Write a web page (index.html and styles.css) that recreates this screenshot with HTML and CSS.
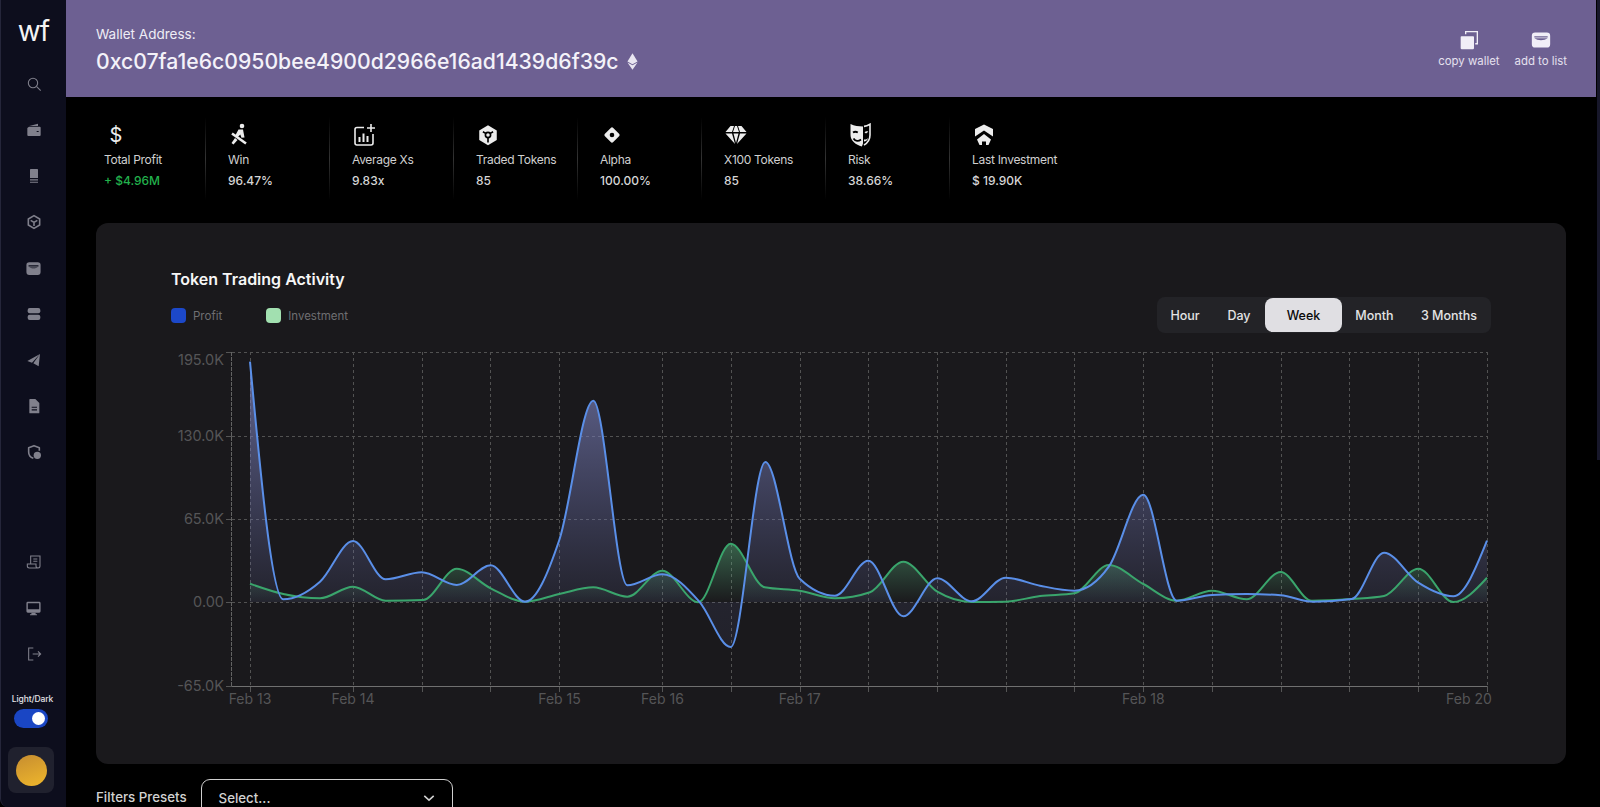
FILE: index.html
```html
<!DOCTYPE html>
<html lang="en">
<head>
<meta charset="utf-8">
<title>Wallet</title>
<link rel="stylesheet" href="styles.css">
</head>
<body>
<div class="app">
  <aside class="sidebar">
    <div class="logo">wf</div>
    <nav class="nav">
      <a class="nav-item"><svg class="ico-s" viewBox="0 0 24 24"><circle cx="10.5" cy="10.5" r="7" class="st"/><path d="M16 16l6 6" class="st"/></svg></a>
      <a class="nav-item"><svg class="ico-s" viewBox="0 0 24 24"><path fill-rule="evenodd" d="M4.5 7h16A1.5 1.5 0 0 1 22 8.500V19.500A1.500 1.500 0 0 1 20.500 21H3.500A1.500 1.500 0 0 1 2 19.500V9zM5 6l13-3.500V6zM16 13.500h3V15h-3z"/></svg></a>
      <a class="nav-item"><svg class="ico-s" viewBox="0 0 24 24"><path d="M7 1.500h10a1 1 0 0 1 1 1V15H6V2.500a1 1 0 0 1 1-1zM6 17h12v1.800H6zM6 20.500h12v1.800H6z"/></svg></a>
      <a class="nav-item"><svg class="ico-s" viewBox="0 0 24 24"><path class="st2" d="M12 2.500l8.500 5v9l-8.500 5-8.500-5v-9zM7 9.500l5 3 5-3M12 12.500V18"/></svg></a>
      <a class="nav-item"><svg class="ico-s ico-wide" viewBox="0 0 24 24"><path fill-rule="evenodd" d="M6 3h12a4 4 0 0 1 4 4v10a4 4 0 0 1-4 4H6a4 4 0 0 1-4-4V7a4 4 0 0 1 4-4zM5 7.500v1.700h14V7.500zM6 10.500c2 1.500 10 1.500 12 0z"/></svg></a>
      <a class="nav-item"><svg class="ico-s" viewBox="0 0 24 24"><rect x="2.500" y="3" width="19" height="8" rx="3"/><rect x="2.500" y="13" width="19" height="8" rx="3"/></svg></a>
      <a class="nav-item"><svg class="ico-s" viewBox="0 0 24 24"><path d="M21 3L2 13.500l7 2.500zM21 3L11 17l8 4.500z"/></svg></a>
      <a class="nav-item"><svg class="ico-s" viewBox="0 0 24 24"><path fill-rule="evenodd" d="M6 1.500h8l6 6V22a1 1 0 0 1-1 1H6a1 1 0 0 1-1-1V2.500a1 1 0 0 1 1-1zM8.500 13v1.600h8V13zM8.500 17v1.600h8V17z"/></svg></a>
      <a class="nav-item"><svg class="ico-s" viewBox="0 0 24 24"><path class="st2" d="M11 21.500C6.500 20 4 16.500 4 12V5.500l8-3 8 3V10"/><circle cx="17" cy="17" r="5.500"/></svg></a>
    </nav>
    <div class="spacer"></div>
    <nav class="nav">
      <a class="nav-item"><svg class="ico-s" viewBox="0 0 24 24"><path class="st" d="M7 15V3h14v15a3 3 0 0 1-3 3H5a3 3 0 0 1-3-3v-3h13v3a3 3 0 0 0 3 3M11 7.500h6M11 11h6"/></svg></a>
      <a class="nav-item"><svg class="ico-s ico-wide" viewBox="0 0 24 24"><path fill-rule="evenodd" d="M4 2.500h16a2 2 0 0 1 2 2V16a2 2 0 0 1-2 2H4a2 2 0 0 1-2-2V4.500a2 2 0 0 1 2-2zM4 4.500V13h16V4.500z"/><path d="M9 18h6v2h2v1.500H7V20h2z"/></svg></a>
      <a class="nav-item"><svg class="ico-s" viewBox="0 0 24 24"><path class="st" d="M11 3H4v18h7M10 12h12M18 8l4 4-4 4"/></svg></a>
    </nav>
    <div class="mode-label">Light/Dark</div>
    <div class="toggle"><span class="knob"></span></div>
    <div class="avatar-box"><span class="avatar"></span></div>
  </aside>

  <main class="main">
    <header class="banner">
      <div class="wallet">
        <div class="wallet-label">Wallet Address:</div>
        <div class="wallet-address">
          <span>0xc07fa1e6c0950bee4900d2966e16ad1439d6f39c</span>
          <svg class="eth" viewBox="0 0 12 18"><path d="M6 0l5.500 9L6 12 .5 9z"/><path d="M6 13.200l5.500-3.200L6 18 .5 10z"/></svg>
        </div>
      </div>
      <div class="actions">
        <div class="action">
          <svg class="action-ico" viewBox="0 0 24 24"><path d="M3 7.500h14a1 1 0 0 1 1 1V22a1 1 0 0 1-1 1H3a1 1 0 0 1-1-1V8.500a1 1 0 0 1 1-1z"/><path class="st" d="M8 5V2h14v14.500h-2.500"/></svg>
          <span>copy wallet</span>
        </div>
        <div class="action">
          <svg class="action-ico" viewBox="0 0 24 24"><path fill-rule="evenodd" d="M5 3h14a4 4 0 0 1 4 4v10a4 4 0 0 1-4 4H5a4 4 0 0 1-4-4V7a4 4 0 0 1 4-4zM4 7.500v1.500h16V7.500zM4 10c4 3 12 3 16 0z"/></svg>
          <span>add to list</span>
        </div>
      </div>
    </header>

    <section class="stats">
      <div class="stat">
        <div class="stat-ico dollar">$</div>
        <div class="stat-label">Total Profit</div>
        <div class="stat-value gain">+ $4.96M</div>
      </div>
      <div class="divider"></div>
      <div class="stat">
        <svg class="stat-ico" viewBox="0 0 24 24"><circle cx="14" cy="3" r="2.300"/><path d="M10.500 6.500h4.500l1.500 8-3 .2-1.200-3.200-3.300 3.200-2-1.700zM7 15l-3.500 5 2 1.500 4-4.500z"/><path class="st-b" d="M4 10.500l14 10"/></svg>
        <div class="stat-label">Win</div>
        <div class="stat-value">96.47%</div>
      </div>
      <div class="divider"></div>
      <div class="stat">
        <svg class="stat-ico" viewBox="0 0 24 24"><path class="st" d="M12 4.500H5a2 2 0 0 0-2 2V20a2 2 0 0 0 2 2h14a2 2 0 0 0 2-2v-9"/><path class="st" d="M19 1v8M15 5h8"/><path d="M6.500 14h2v5h-2zM10.500 10.500h2V19h-2zM14.500 13h2v6h-2z"/></svg>
        <div class="stat-label">Average Xs</div>
        <div class="stat-value">9.83x</div>
      </div>
      <div class="divider"></div>
      <div class="stat">
        <svg class="stat-ico" viewBox="-1 -1 26 26"><path d="M12 1.500l9.500 5.500v10.500L12 23l-9.500-5.500V7z"/><path class="cut" d="M6.500 8.500L10 10.500M17.500 8.500L14 10.500M12 15v5"/><circle class="cut" cx="12" cy="12" r="2.800"/></svg>
        <div class="stat-label">Traded Tokens</div>
        <div class="stat-value">85</div>
      </div>
      <div class="divider"></div>
      <div class="stat">
        <svg class="stat-ico" viewBox="-2.500 -2.500 29 29"><path fill-rule="evenodd" d="M10.500 3.500a2 2 0 0 1 3 0l7 7a2 2 0 0 1 0 3l-7 7a2 2 0 0 1-3 0l-7-7a2 2 0 0 1 0-3zM12 9.200a2.800 2.800 0 1 0 0 5.600a2.800 2.800 0 1 0 0-5.600z"/></svg>
        <div class="stat-label">Alpha</div>
        <div class="stat-value">100.00%</div>
      </div>
      <div class="divider"></div>
      <div class="stat">
        <svg class="stat-ico" viewBox="0 0 24 24"><path d="M6.500 3h3.500L8 9H1.500zM11 3h2l2 6H9zM14 3h3.500l5 6H16zM1.500 10.500H8l3 10.500zM9.500 10.500h5L12 20zM16 10.500h6.500L13 21z"/></svg>
        <div class="stat-label">X100 Tokens</div>
        <div class="stat-value">85</div>
      </div>
      <div class="divider"></div>
      <div class="stat">
        <svg class="stat-ico" viewBox="0 0 24 24"><path d="M2.500 1c4 1.800 8 2.500 12.500 2.500v17c-.3 1.200-.7 2-1.200 3C8 22 2.500 17.500 2.500 12z"/><path class="st" d="M16 3.400c2.500-.2 4-1 6-2.200V12c0 4.500-2.500 8-6 10"/><path class="cut" d="M5 9.500c1.500-1 3.200-1 4.800 0M5.500 15.500c2 3 5 3 7.500 1"/><path d="M16.500 9.300c1.200-1 2.500-1.200 3.800-.6L18 10.500zM16 16.500c1.500.3 2.800-.2 4-1.500-.3 2-2 3.500-4 3.500z"/></svg>
        <div class="stat-label">Risk</div>
        <div class="stat-value">38.66%</div>
      </div>
      <div class="divider"></div>
      <div class="stat">
        <svg class="stat-ico" viewBox="0 0 24 24"><path d="M12 1.500l9 4.500v7.500l-9-6-9 6V6z"/><path d="M12 11l7 5.500L16.500 22H14v-3.500h-4V22H7.500L5 16.500z"/></svg>
        <div class="stat-label">Last Investment</div>
        <div class="stat-value">$ 19.90K</div>
      </div>
    </section>

    <section class="card">
      <h2 class="card-title">Token Trading Activity</h2>
      <div class="toolbar">
        <div class="legend">
          <span class="legend-item"><i class="swatch swatch-blue"></i>Profit</span>
          <span class="legend-item"><i class="swatch swatch-green"></i>Investment</span>
        </div>
        <div class="segments">
          <button class="segment">Hour</button>
          <button class="segment">Day</button>
          <button class="segment is-active">Week</button>
          <button class="segment">Month</button>
          <button class="segment">3 Months</button>
        </div>
      </div>
      <svg id="chart" class="chart" viewBox="165 340 1330 370" width="1330" height="370"></svg>
    </section>

    <section class="filters">
      <span class="filters-label">Filters Presets</span>
      <div class="select">
        <span>Select...</span>
        <svg class="chevron" viewBox="0 0 14 8"><path d="M1.500 1.500L7 6.500l5.500-5"/></svg>
      </div>
    </section>
  </main>
  <div class="scroll-thumb"></div>
</div>
<script src="chart.js"></script>
</body>
</html>
```

FILE: styles.css
```css
* { box-sizing: border-box; }
html, body { margin: 0; height: 100%; background: #000; overflow: hidden; }
body { font-family: Inter, "Liberation Sans", sans-serif; color: #e6e6e6; }

.app { display: flex; height: 807px; position: relative; overflow: hidden; }

/* sidebar */
.sidebar {
  width: 66px; flex: none; height: 807px;
  display: flex; flex-direction: column; align-items: center;
  background: #0d0e1d; border-left: 1px solid #25263a; border-bottom-left-radius: 8px;
  color: #80808c; padding-bottom: 14px;
}
.logo { height: 61px; padding-top: 14px; font-size: 28px; line-height: 34px; font-weight: 400; color: #f4f4f4; letter-spacing: -1px; }
.nav { display: flex; flex-direction: column; align-items: center; }
.nav-item { width: 46px; height: 46px; display: flex; align-items: center; justify-content: center; }
.spacer { flex: 1; }
.ico-s { width: 16px; height: 16px; fill: currentColor; }
.ico-wide { width: 17px; height: 17px; }
.st { fill: none; stroke: currentColor; stroke-width: 1.6; }
.st-b { fill: none; stroke: currentColor; stroke-width: 2.600; }
.st2 { fill: none; stroke: currentColor; stroke-width: 2.400; stroke-linejoin: round; }
.cut { fill: none; stroke: #000; stroke-width: 1.8; }
.mode-label { margin: 16px 2px 0 0; font-size: 8.500px; line-height: 12px; font-weight: 500; color: #e4e4e8; white-space: nowrap; letter-spacing: -.1px; }
.toggle { width: 34px; height: 19px; margin: 4px 5px 0 0; padding: 3px 3px 3px 18px; border-radius: 10px; background: #1a46c4; }
.knob { display: block; width: 13px; height: 13px; border-radius: 50%; background: #fff; }
.avatar-box { width: 46px; height: 46px; margin: 19px 5px 0 0; border-radius: 8px; background: #20212e; display: flex; align-items: flex-start; justify-content: center; padding-top: 8px; }
.avatar { width: 31px; height: 31px; border-radius: 50%; background: linear-gradient(160deg, #c68d30, #efb72c); }

/* main */
.main { flex: 1; min-width: 0; padding-right: 4px; }
.banner {
  height: 97px; background: #6d6092; padding: 0 29px 0 30px;
  display: flex; align-items: flex-start; justify-content: space-between;
}
.wallet-label { margin-top: 26px; font-size: 13.500px; line-height: 17px; color: #efedf5; }
.wallet-address { margin-top: 5px; display: flex; align-items: center; gap: 8px; font-size: 21.200px; line-height: 26px; font-weight: 500; color: #f4f2f9; }
.eth { width: 11px; height: 17px; fill: #e9e6f1; }
.actions { display: flex; gap: 15px; padding-top: 30px; }
.action { display: flex; flex-direction: column; align-items: center; gap: 3px; font-size: 11.400px; line-height: 16px; color: #e5e1ef; }
.action-ico { width: 20px; height: 20px; fill: #f1eef7; color: #f1eef7; }

/* stats */
.stats { display: flex; height: 83px; margin-top: 20px; padding-left: 38px; }
.stat { width: 101px; padding-top: 6px; }
.divider { width: 1px; margin-right: 22px; background: linear-gradient(to bottom, transparent, #333 50%, transparent); }
.stat-ico { display: block; width: 24px; height: 24px; fill: #ececec; color: #ececec; }
.dollar { font-size: 20px; line-height: 24px; text-align: center; font-weight: 400; }
.stat-label { margin-top: 5px; font-size: 12px; line-height: 16px; color: #d0d0d0; white-space: nowrap; letter-spacing: -.3px; }
.stat-value { margin-top: 5px; font-size: 12px; line-height: 16px; font-weight: 500; color: #d6d6d6; white-space: nowrap; }
.gain { color: #22b14c; }

/* card */
.card { width: 1470px; height: 541px; margin: 23px 0 0 30px; padding: 46px 0 0 69px; border-radius: 12px; background: #1a191c; }
.card-title { margin: 0 0 0 6px; font-size: 16px; line-height: 20px; font-weight: 600; color: #f6f6f6; }
.toolbar { width: 1326px; height: 36px; margin-top: 8px; padding-left: 6px; display: flex; align-items: center; justify-content: space-between; }
.legend { display: flex; margin-top: 1px; }
.legend-item { display: flex; align-items: center; gap: 7px; font-size: 11.500px; color: #6f6f72; }
.legend-item + .legend-item { margin-left: 44px; }
.swatch { width: 15px; height: 15px; border-radius: 4px; }
.swatch-blue { background: #1c48c9; }
.swatch-green { background: #a2e0b0; }
.segments { display: grid; grid-template-columns: 56px 52px 77px 65px 84px; height: 36px; padding: 1px 0; border-radius: 8px; background: #232327; }
.segment { border: 0; padding: 0; background: none; font: 500 12.500px Inter, "Liberation Sans", sans-serif; color: #e4e4e4; border-radius: 8px; }
.is-active { background: #e0dfe3; color: #0a0a0a; }
.chart { display: block; margin-top: 7px; overflow: visible; }
.grid { stroke: #525252; stroke-width: 1; stroke-dasharray: 3 3; fill: none; }
.axis { stroke: #707070; stroke-width: 1; fill: none; }
.axis-y { stroke: #636363; stroke-dasharray: 4 1; }
.tick { stroke: #555; stroke-width: 1; }
.lbl { fill: #555557; font-size: 14px; font-family: Inter, "Liberation Sans", sans-serif; }
.lbl-y { font-size: 14.500px; }
.line { fill: none; stroke-width: 2; stroke-linejoin: round; }
.line-blue { stroke: #5a8fe8; }
.line-green { stroke: #3aa56c; }

/* filters */
.filters { display: flex; align-items: flex-start; gap: 14px; margin: 15px 0 0 30px; }
.filters-label { margin-top: 9px; font-size: 13.300px; line-height: 18px; font-weight: 500; color: #d2d2d2; }
.select { width: 252px; height: 38px; padding: 0 17px; border: 1.500px solid #cfcfcf; border-radius: 9px; display: flex; align-items: center; justify-content: space-between; font-size: 13.300px; font-weight: 500; color: #d2d2d2; }
.chevron { width: 12px; height: 8px; fill: none; stroke: #d2d2d2; stroke-width: 1.800; }

.scroll-thumb { position: absolute; top: 0; right: 0; width: 3px; height: 460px; background: #17172a; }
```

FILE: chart.js
```js
(function () {
  var NS = 'http://www.w3.org/2000/svg';
  var svg = document.getElementById('chart');
  var ZERO = 602;

  var blue = [[250,361.7],[283.3,599.3],[320,581.7],[353,541],[385.7,579.3],[421.7,572.3],[456.7,585],[490.7,565.3],[525,601.7],[559.3,540],[593.3,400.7],[627.3,585.3],[662.3,574.3],[699.3,601.7],[730.7,647],[765.3,462],[799.7,578.7],[835,595.7],[868.3,560.7],[903.3,616.3],[937.3,578.3],[971.7,601.3],[1005.7,577.7],[1040,585.7],[1074.3,590.7],[1108.8,566.7],[1143.3,494.7],[1176.7,600.7],[1212,595],[1246.7,594],[1280.7,595.3],[1313.3,601.7],[1351.7,599],[1384,552.7],[1418.3,582.7],[1453.3,596.3],[1487,540.7]];
  var green = [[250,583.7],[283.3,594],[320,598.3],[353,586.7],[385.7,600.7],[423,600],[456.7,568.7],[490.7,588.3],[525,601.7],[559.3,594],[593.3,587.3],[627.3,596.7],[662.3,570.7],[698.3,602.3],[730.7,543.7],[764.7,587.3],[799.7,590.7],[835,598.3],[870,592.3],[903.3,561.7],[937.3,591.7],[971.7,602],[1005.7,601.7],[1040,596],[1074.3,593.3],[1108.8,565],[1143.3,584],[1176.7,600.7],[1212,590.7],[1246.7,599.3],[1280.7,572],[1311.7,600.7],[1351.7,599],[1384,596],[1418.3,568.7],[1453.3,602],[1487,577.7]];

  function sign(v) { return v < 0 ? -1 : 1; }

  function tangents(pts) {
    var n = pts.length, t = [], i;
    for (i = 1; i < n - 1; i++) {
      var h0 = pts[i][0] - pts[i - 1][0], h1 = pts[i + 1][0] - pts[i][0];
      var s0 = (pts[i][1] - pts[i - 1][1]) / h0, s1 = (pts[i + 1][1] - pts[i][1]) / h1;
      var p = (s0 * h1 + s1 * h0) / (h0 + h1);
      t[i] = (sign(s0) + sign(s1)) * Math.min(Math.abs(s0), Math.abs(s1), 0.5 * Math.abs(p));
    }
    t[0] = (3 * (pts[1][1] - pts[0][1]) / (pts[1][0] - pts[0][0]) - t[1]) / 2;
    t[n - 1] = (3 * (pts[n - 1][1] - pts[n - 2][1]) / (pts[n - 1][0] - pts[n - 2][0]) - t[n - 2]) / 2;
    return t;
  }

  /* monotone-x interpolation */
  function smooth(pts) {
    var t = tangents(pts), d = 'M' + pts[0][0] + ' ' + pts[0][1];
    for (var i = 1; i < pts.length; i++) {
      var a = pts[i - 1], b = pts[i], dx = (b[0] - a[0]) / 3;
      d += 'C' + (a[0] + dx).toFixed(1) + ' ' + (a[1] + dx * t[i - 1]).toFixed(1) + ' ' +
        (b[0] - dx).toFixed(1) + ' ' + (b[1] - dx * t[i]).toFixed(1) + ' ' + b[0] + ' ' + b[1];
    }
    return d;
  }

  function el(name, attrs, text) {
    var n = document.createElementNS(NS, name);
    for (var k in attrs) n.setAttribute(k, attrs[k]);
    if (text) n.textContent = text;
    svg.appendChild(n);
    return n;
  }

  function gradient(defs, id, y1, y2, stops) {
    var g = document.createElementNS(NS, 'linearGradient');
    g.setAttribute('id', id);
    g.setAttribute('gradientUnits', 'userSpaceOnUse');
    g.setAttribute('x1', 0); g.setAttribute('x2', 0);
    g.setAttribute('y1', y1); g.setAttribute('y2', y2);
    stops.forEach(function (st) {
      var s = document.createElementNS(NS, 'stop');
      s.setAttribute('offset', st[0]);
      s.setAttribute('stop-color', st[1]);
      s.setAttribute('stop-opacity', st[2]);
      g.appendChild(s);
    });
    defs.appendChild(g);
  }

  var defs = el('defs', {});
  gradient(defs, 'fillBlue', 360, 650, [[0, '#8186c0', 0.72], [0.83, '#6a70b0', 0.12], [1, '#6a70b0', 0.1]]);
  gradient(defs, 'fillGreen', 543, 603, [[0, '#5fc58a', 0.42], [1, '#5fc58a', 0]]);

  var vx = [250,353,421.7,490.3,559,662,730.7,799.7,868.3,937.3,1005.7,1074.3,1143.3,1212,1280.7,1349.3,1418.3,1487];
  var hy = [352, 436, 519, 602];
  hy.forEach(function (y) {
    el('line', { 'class': 'grid', x1: 232, x2: 1487, y1: y + 0.5, y2: y + 0.5 });
    el('line', { 'class': 'tick', x1: 226, x2: 232, y1: y + 0.5, y2: y + 0.5 });
  });
  el('line', { 'class': 'tick', x1: 226, x2: 232, y1: 686.5, y2: 686.5 });
  vx.forEach(function (x) {
    var rx = Math.round(x) + 0.5;
    el('line', { 'class': 'grid', x1: rx, x2: rx, y1: 352, y2: 686 });
    el('line', { 'class': 'tick', x1: rx, x2: rx, y1: 686, y2: 692 });
  });
  el('line', { 'class': 'axis axis-y', x1: 231.5, x2: 231.5, y1: 352, y2: 686 });
  el('line', { 'class': 'axis', x1: 232, x2: 1487, y1: 686.5, y2: 686.5 });

  function area(points, id) {
    var d = smooth(points);
    var last = points[points.length - 1];
    d += 'L' + last[0] + ' ' + ZERO + 'L' + points[0][0] + ' ' + ZERO + 'Z';
    el('path', { d: d, fill: 'url(#' + id + ')' });
  }
  area(blue, 'fillBlue');
  area(green, 'fillGreen');
  el('path', { 'class': 'line line-green', d: smooth(green) });
  el('path', { 'class': 'line line-blue', d: smooth(blue) });

  [['195.0K', 365], ['130.0K', 441], ['65.0K', 524], ['0.00', 607], ['-65.0K', 691]].forEach(function (l) {
    el('text', { 'class': 'lbl lbl-y', x: 224, y: l[1], 'text-anchor': 'end' }, l[0]);
  });
  [['Feb 13', 250], ['Feb 14', 353], ['Feb 15', 559.5], ['Feb 16', 662.5], ['Feb 17', 799.7], ['Feb 18', 1143.3], ['Feb 20', 1469]].forEach(function (l) {
    el('text', { 'class': 'lbl', x: l[1], y: 704, 'text-anchor': 'middle' }, l[0]);
  });
})();
```
